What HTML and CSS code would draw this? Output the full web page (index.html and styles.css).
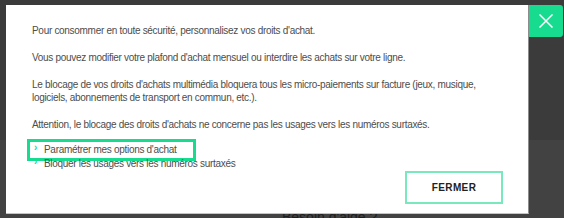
FILE: index.html
```html
<!DOCTYPE html>
<html>
<head>
    <meta charset="UTF-8">
    <title>Droits d'achat</title>
    <link rel="stylesheet" href="styles.css">
</head>
<body>
    <div class="backdrop">
        <div class="modal">
            <button class="modal-close" aria-label="Fermer">
                <svg width="14" height="14" viewBox="0 0 14 14">
                    <path d="M0.5 0.5 L13.5 13.5 M13.5 0.5 L0.5 13.5" stroke="#ffffff" stroke-width="1.5" fill="none"/>
                </svg>
            </button>
            <p>Pour consommer en toute sécurité, personnalisez vos droits d'achat.</p>
            <p>Vous pouvez modifier votre plafond d'achat mensuel ou interdire les achats sur votre ligne.</p>
            <p>Le blocage de vos droits d'achats multimédia bloquera tous les micro-paiements sur facture (jeux, musique, logiciels, abonnements de transport en commun, etc.).</p>
            <p>Attention, le blocage des droits d'achats ne concerne pas les usages vers les numéros surtaxés.</p>
            <ul class="links">
                <li><a href="#" class="focused">Paramétrer mes options d'achat</a></li>
                <li><a href="#">Bloquer les usages vers les numéros surtaxés</a></li>
            </ul>
            <div class="modal-footer">
                <button class="btn-close">FERMER</button>
            </div>
        </div>
        <div class="help">Besoin d'aide ?</div>
    </div>
</body>
</html>
```

FILE: styles.css
```css
/* fond de page assombri */
body {
    margin: 0;
    background-color: #3b3b3b;
    font-family: "Liberation Sans", Arial, sans-serif;
    overflow: hidden;
}

.backdrop {
    height: 218px;
    padding: 5px 0 0 6px;
    box-sizing: border-box;
    background: linear-gradient(#3b3b3b 0, #3b3b3b 140px, #424242 140px);
}

.modal {
    position: relative;
    z-index: 1;
    width: 523px;
    height: 209px;
    box-sizing: border-box;
    padding: 19px 42px 10px 26px;
    display: flex;
    flex-direction: column;
    background-color: #ffffff;
    border-right: 1px solid #8c8c8c;
    border-bottom: 1px solid #c4c4c4;
    color: #4d4d4d;
    font-size: 10px;
    letter-spacing: -0.3px;
    line-height: 13px;
}

.modal p {
    margin: 0 0 14px;
}

.modal p:nth-of-type(4) {
    margin-bottom: 12px;
}

.modal-close {
    position: absolute;
    top: 0;
    left: 523px;
    width: 34px;
    height: 32px;
    border: none;
    padding: 0;
    border-radius: 0 3px 3px 0;
    background-color: #17dc8f;
    display: flex;
    align-items: center;
    justify-content: center;
    cursor: pointer;
}

.links {
    list-style: none;
    margin: 0;
    padding: 0;
    line-height: 14px;
}

.links a {
    display: inline-block;
    color: #4d4d4d;
    text-decoration: none;
    padding: 0 16px 0 13px;
    margin-left: -1px;
    position: relative;
}

.links a::before {
    content: "›";
    position: absolute;
    left: 3px;
    top: -2px;
    color: #17dc8f;
    font-weight: bold;
    font-size: 10px;
}

.links a.focused {
    outline: 3px solid #17dc8f;
    outline-offset: 1px;
}

.modal-footer {
    display: flex;
    justify-content: flex-end;
    margin-top: auto;
    margin-right: -17px;
}

.btn-close {
    width: 98px;
    height: 33px;
    background-color: #ffffff;
    border: 2px solid #7ae8bd;
    font-family: "Liberation Sans", Arial, sans-serif;
    font-weight: bold;
    font-size: 10px;
    letter-spacing: 0.4px;
    color: #222222;
    cursor: pointer;
}

.help {
    margin: -5px 0 0 276px;
    font-size: 14px;
    color: #1e1e1e;
}
```
